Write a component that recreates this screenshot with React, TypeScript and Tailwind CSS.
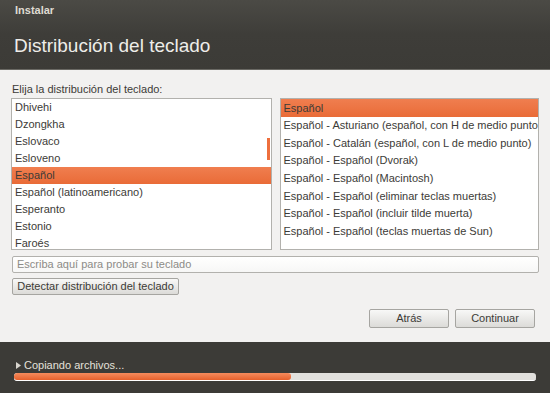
const layouts = [
  'Dhivehi',
  'Dzongkha',
  'Eslovaco',
  'Esloveno',
  'Español',
  'Español (latinoamericano)',
  'Esperanto',
  'Estonio',
  'Faroés',
]

const variants = [
  'Español',
  'Español - Asturiano (español, con H de medio punto)',
  'Español - Catalán (español, con L de medio punto)',
  'Español - Español (Dvorak)',
  'Español - Español (Macintosh)',
  'Español - Español (eliminar teclas muertas)',
  'Español - Español (incluir tilde muerta)',
  'Español - Español (teclas muertas de Sun)',
]

const font = { fontFamily: '"Liberation Sans", "DejaVu Sans", sans-serif' }

export default function App() {
  const selectedLayout = 'Español'
  const selectedVariant = 'Español'
  const progress = 53

  return (
    <div
      className="w-[550px] h-[393px] flex flex-col bg-[#f2f1f0] text-[#3c3b37] overflow-hidden"
      style={font}
    >
      {/* Header */}
      <div className="h-[70px] flex flex-col bg-gradient-to-b from-[#4b4a45] via-[#3e3d39] to-[#3c3b37] border-b border-[#6a6964] flex-shrink-0">
        <p className="pl-[15px] pt-[2px] text-[11px] font-bold leading-[16px] text-[#dfdbd2]">Instalar</p>
        <h1 className="pl-[14px] pt-[16px] text-[19px] leading-[24px] text-[#eeede9]">Distribución del teclado</h1>
      </div>

      {/* Body */}
      <div className="flex-1 flex flex-col px-[11px] pt-[11px]">
        <p className="text-[11px] leading-[16px] pl-[1px] mb-[1px]">Elija la distribución del teclado:</p>

        <div className="flex gap-[8px] h-[152px]">
          {/* Layout list */}
          <div className="relative w-[261px] border border-[#b2b1ad] bg-white overflow-hidden">
            {layouts.map(l => (
              <div
                key={l}
                className={
                  l === selectedLayout
                    ? 'h-[17px] flex items-center pl-[3px] text-[11px] whitespace-nowrap bg-gradient-to-b from-[#f07e4f] to-[#e96b37] text-[#3c3b37]'
                    : 'h-[17px] flex items-center pl-[3px] text-[11px] whitespace-nowrap'
                }
              >
                {l}
              </div>
            ))}
            <div className="absolute right-[1px] top-[39px] w-[3px] h-[22px] bg-[#ee6f3d]" />
          </div>

          {/* Variant list */}
          <div className="w-[260px] border border-[#b2b1ad] bg-white overflow-hidden">
            {variants.map(v => (
              <div
                key={v}
                className={
                  v === selectedVariant
                    ? 'h-[17.6px] flex items-center pl-[3px] text-[11px] whitespace-nowrap bg-gradient-to-b from-[#f07e4f] to-[#e96b37] text-[#3c3b37]'
                    : 'h-[17.6px] flex items-center pl-[3px] text-[11px] whitespace-nowrap'
                }
              >
                {v}
              </div>
            ))}
          </div>
        </div>

        {/* Test input */}
        <div className="mt-[6px] ml-[1px] w-[527px] h-[17px] border border-[#b2b1ad] rounded-[2px] bg-gradient-to-b from-white to-[#f7f7f6] flex items-center pl-[4px]">
          <span className="text-[11px] text-[#8c8b87]">Escriba aquí para probar su teclado</span>
        </div>

        <div className="mt-[5px] ml-[1px] flex">
          <button className="w-[167px] h-[17px] border border-[#a6a5a1] rounded-[2px] bg-gradient-to-b from-[#f8f8f7] to-[#dcdbd8] text-[11px] leading-[15px] text-[#3c3b37]">
            Detectar distribución del teclado
          </button>
        </div>

        <div className="mt-[14px] flex justify-end gap-[6px] pr-[4px]">
          <button className="w-[80px] h-[19px] border border-[#a6a5a1] rounded-[2px] bg-gradient-to-b from-[#f8f8f7] to-[#dcdbd8] text-[11px] text-[#3c3b37]">
            Atrás
          </button>
          <button className="w-[80px] h-[19px] border border-[#a6a5a1] rounded-[2px] bg-gradient-to-b from-[#f8f8f7] to-[#dcdbd8] text-[11px] text-[#3c3b37]">
            Continuar
          </button>
        </div>
      </div>

      {/* Footer */}
      <div className="h-[51px] flex-shrink-0 bg-[#3c3b37] flex flex-col px-[14px] pt-[16px]">
        <div className="flex items-center gap-[3px] pl-[2px] h-[14px]">
          <svg width="5" height="7" viewBox="0 0 5 7" className="flex-shrink-0">
            <path d="M0 0 L5 3.5 L0 7 Z" fill="#d8d5ce" />
          </svg>
          <span className="text-[11px] leading-[14px] text-[#e4e1da]">Copiando archivos...</span>
        </div>
        <div className="mt-[1px] w-[522px] h-[8px] rounded-[3px] bg-[#e1e0dc] border-b border-white overflow-hidden">
          <div className="h-full rounded-[3px] bg-gradient-to-b from-[#f58b5c] to-[#e6602a]" style={{ width: `${progress}%` }} />
        </div>
      </div>
    </div>
  )
}
